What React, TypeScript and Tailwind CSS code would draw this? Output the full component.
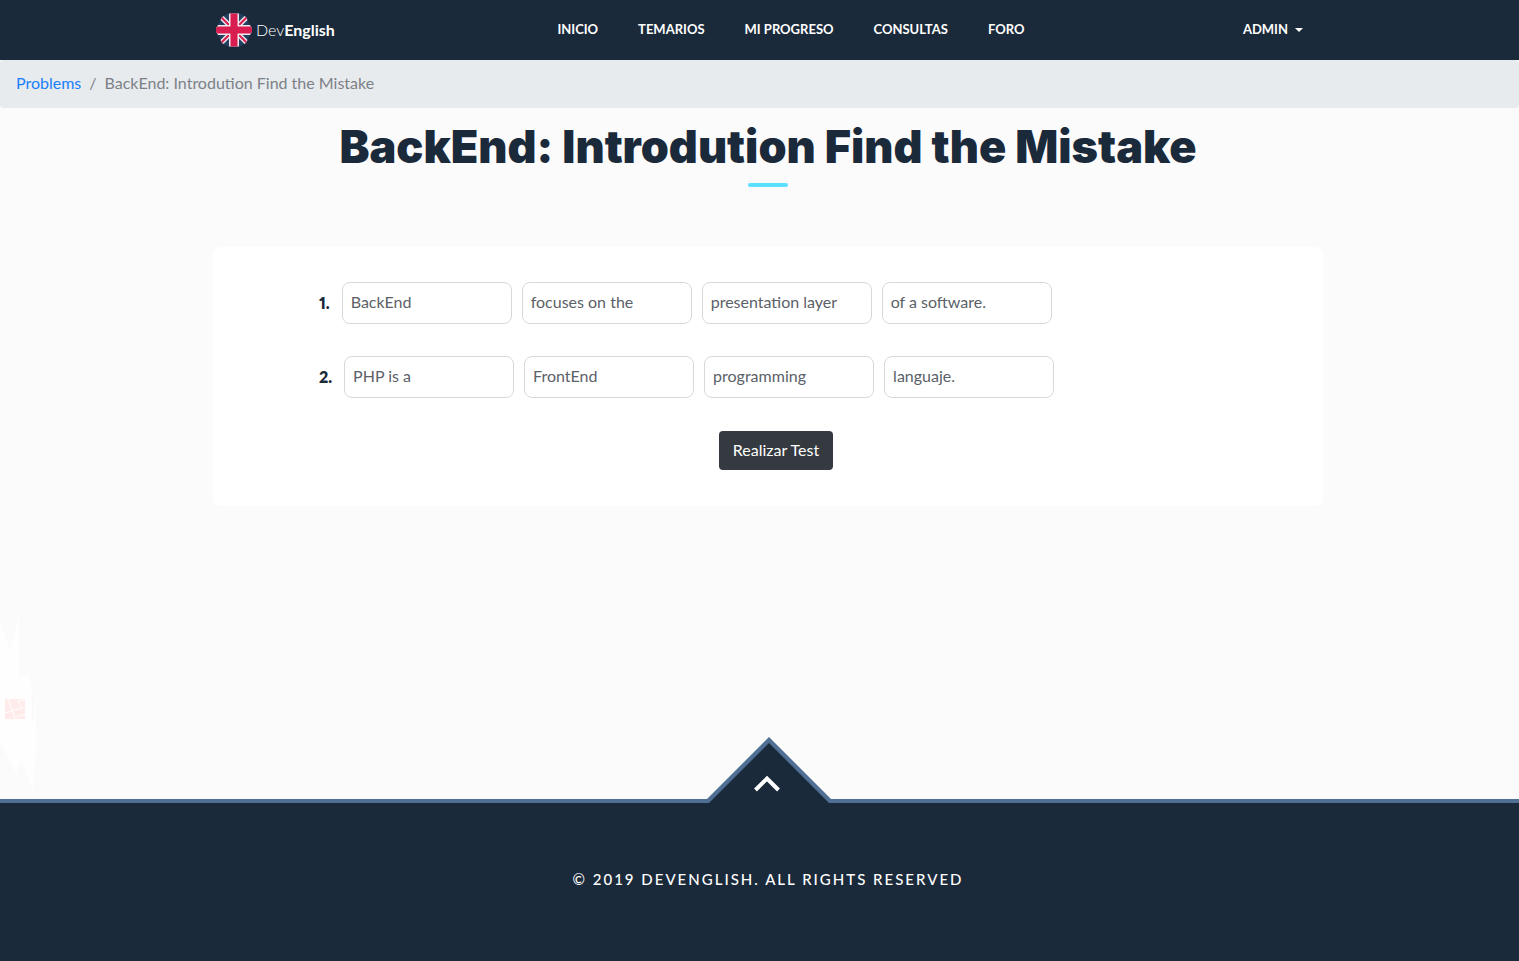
const navLinks = ['INICIO', 'TEMARIOS', 'MI PROGRESO', 'CONSULTAS', 'FORO'];

const questions = [
  ['BackEnd', 'focuses on the', 'presentation layer', 'of a software.'],
  ['PHP is a', 'FrontEnd', 'programming', 'languaje.'],
];

function FlagIcon() {
  return (
    <svg viewBox="0 0 36 34" className="h-[34px] w-9" aria-hidden="true">
      <defs>
        <clipPath id="flag-shape">
          <path d="M12 .5H24L30 4L34 12L36 15.500V18.500L34 22L30 30L24 33.500H12L6 30L2 22L0 18.500V15.500L2 12L6 4Z" />
        </clipPath>
      </defs>
      <g clipPath="url(#flag-shape)">
        <path fill="#21405f" d="M0 0h36v34H0z" />
        <path stroke="#eee4ea" strokeWidth="5" d="M3 2l30 30M33 2L3 32" />
        <path stroke="#d81e50" strokeWidth="2" d="M3 2l30 30M33 2L3 32" />
        <path fill="#f1e8ee" d="M13 0h10v34H13zM0 12h36v10H0z" />
        <path fill="#d81e50" d="M14.500 0h7v34h-7zM0 13.500h36v7H0z" />
      </g>
    </svg>
  );
}

function Header() {
  return (
    <header className="bg-[#1b2a3a] pl-[17px] text-white">
      <div className="mx-auto flex h-15 max-w-[1110px] items-center justify-between pr-5 pl-[3px]">
        <a href="#inicio" className="flex items-center gap-1 text-base">
          <FlagIcon />
          <span className="font-light">
            Dev<span className="font-bold">English</span>
          </span>
        </a>
        <nav className="flex gap-10 pl-1 text-[13px] font-bold">
          {navLinks.map((label) => (
            <a key={label} href="#menu">
              {label}
            </a>
          ))}
        </nav>
        <button type="button" className="flex items-center gap-[7px] text-[13px] font-bold">
          ADMIN
          <svg viewBox="0 0 8 4" className="h-1 w-2" aria-hidden="true">
            <path fill="currentColor" d="M0 0h8L4 4z" />
          </svg>
        </button>
      </div>
    </header>
  );
}

function Breadcrumb() {
  return (
    <nav aria-label="breadcrumb" className="rounded-sm bg-[#e8ebee] px-4 pt-[11px] pb-[13px] text-base">
      <ol className="flex gap-2 text-[#7b8187]">
        <li>
          <a href="#problems" className="text-[#1a80fb]">
            Problems
          </a>
        </li>
        <li aria-hidden="true">/</li>
        <li aria-current="page">BackEnd: Introdution Find the Mistake</li>
      </ol>
    </nav>
  );
}

function Backdrop() {
  return (
    <svg viewBox="0 0 40 184" className="absolute bottom-0 left-0 h-[184px] w-10" aria-hidden="true">
      <path
        fill="#fefefe"
        d="M0 4L10 37L19 0V64L28 58L33 78L36 108V135L33 176L20 142L17 160L0 126Z"
      />
      <path fill="#ffecea" d="M5 84h20v20H5z" />
      <path fill="none" stroke="#fff" strokeWidth="1" d="M5 98l20-6M8 84l7 19M18 86l4 6M14 103l11-4M18 86l7-1" />
      <path stroke="#f5f5f5" d="M33 80v26" />
    </svg>
  );
}

function ProblemForm() {
  return (
    <form className="mx-auto mt-15 max-w-[1110px] rounded-lg bg-white pt-[35px] pb-9 pl-[106px]">
      <ol className="flex flex-col gap-8">
        {questions.map((parts, row) => (
          <li key={row} className="flex items-center">
            <span className="mr-3 text-base font-extrabold text-[#1b2a3a] proportional-nums">{row + 1}.</span>
            <div className="flex gap-[10px]">
              {parts.map((part, i) => (
                <input
                  key={part}
                  type="text"
                  aria-label={`Question ${row + 1}, part ${i + 1}`}
                  defaultValue={part}
                  className="h-[42px] w-[170px] rounded-lg border border-[#d9d9d9] bg-white px-2 pb-1 text-base text-[#5b6168]"
                />
              ))}
            </div>
          </li>
        ))}
      </ol>
      <div className="mt-[33px] flex justify-center pr-[90px]">
        <button type="button" className="h-[39px] rounded-sm bg-[#353a40] px-[14px] pb-[2px] text-base text-white">
          Realizar Test
        </button>
      </div>
    </form>
  );
}

function Footer() {
  return (
    <footer className="relative border-t-4 border-[#4f6f94] bg-[#1b2a3a] pl-[17px] text-white">
      <a
        href="#top"
        aria-label="Back to top"
        className="absolute bottom-full left-[calc(50%+9px)] -translate-x-1/2"
      >
        <svg viewBox="0 0 124 66" className="h-[66px] w-[124px]" aria-hidden="true">
          <path fill="#4f6f94" d="M62 0L124 62V66H0V62Z" />
          <path fill="#1b2a3a" d="M62 6L122 66H2Z" />
          <path fill="none" stroke="#fff" strokeWidth="4" d="M48.500 53L60 41.500L71.500 53" />
        </svg>
      </a>
      <p className="pt-[65px] pb-[71px] text-center text-[15px] leading-[22px] font-medium tracking-[2px]">
        © 2019 DEVENGLISH. ALL RIGHTS RESERVED
      </p>
    </footer>
  );
}

export default function App() {
  return (
    <div id="top" className="flex min-h-screen flex-col bg-[#fbfbfb] font-[Lato,sans-serif]">
      <Header />
      <Breadcrumb />
      <main className="relative grow pt-[9px] pl-[17px]">
        <Backdrop />
        <div className="relative">
          <h1 className="text-center font-[Inter,sans-serif] text-[45px] leading-15 font-black text-[#1b2a3a]">
            BackEnd: Introdution Find the Mistake
          </h1>
          <div className="mx-auto mt-[6px] h-1 w-10 rounded-full bg-[#5be0ff]" />
          <ProblemForm />
        </div>
      </main>
      <Footer />
    </div>
  );
}
